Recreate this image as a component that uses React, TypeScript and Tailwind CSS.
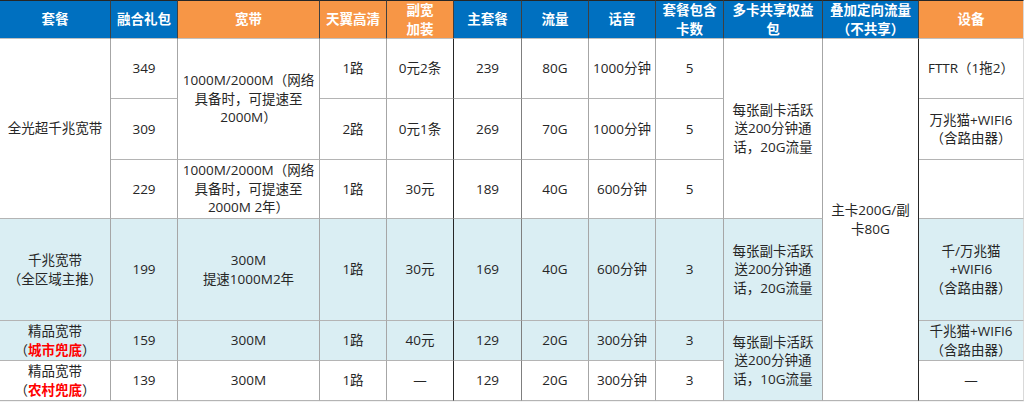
const DARK = "border-r-[#262626]";
const GRAY = "border-r-[#a6a6a6]";

const cols = [111, 67, 142, 67, 67, 68, 67, 67, 68, 99, 96, 105];

type Head = { label: React.ReactNode; orange?: boolean };

const heads: Head[] = [
  { label: "套餐" },
  { label: "融合礼包" },
  { label: "宽带", orange: true },
  { label: "天翼高清", orange: true },
  { label: <>副宽<br />加装</>, orange: true },
  { label: "主套餐" },
  { label: "流量" },
  { label: "话音" },
  { label: <>套餐包含<br />卡数</> },
  { label: <>多卡共享权益<br />包</> },
  { label: <>叠加定向流量<br />（不共享）</> },
  { label: "设备", orange: true },
];

// right-border colour per column (body rows)
const rightColor = [GRAY, GRAY, GRAY, GRAY, DARK, "border-r-[#7f7f7f]", GRAY, GRAY, GRAY, GRAY, DARK, "border-r-[#d9d9d9]"];

const Td = ({
  col,
  children,
  rowSpan,
  blue,
  className = "",
}: {
  col: number;
  children?: React.ReactNode;
  rowSpan?: number;
  blue?: boolean;
  className?: string;
}) => (
  <td
    rowSpan={rowSpan}
    className={`border-b border-r border-b-[#b4b4b4] px-1 text-center align-middle whitespace-nowrap ${rightColor[col]} ${
      blue ? "bg-[#daeef3]" : "bg-white"
    } ${className}`}
  >
    {children}
  </td>
);

const Red = ({ children }: { children: React.ReactNode }) => (
  <>
    （<span className="font-bold text-[#ff0000]">{children}</span>）
  </>
);

export default function App() {
  return (
    <div
      className="h-[402px] w-[1024px] overflow-hidden bg-[#f2f2f2] text-[13.5px] leading-[18.5px] text-[#262626]"
      style={{ fontFamily: '"Open Sans", "Noto Sans CJK SC", sans-serif' }}
    >
      <table className="w-[1024px] table-fixed border-separate border-spacing-0">
        <colgroup>
          {cols.map((w, i) => (
            <col key={i} style={{ width: w }} />
          ))}
        </colgroup>
        <thead>
          <tr className="h-[39px]">
            {heads.map((h, i) => (
              <th
                key={i}
                className={`border-t border-r border-b border-t-[#262626] border-r-[#404040] border-b-[#bfbfbf] px-0 text-center align-middle font-bold whitespace-nowrap text-white ${
                  h.orange ? "bg-[#f79646]" : "bg-[#0070c0]"
                } ${i === 11 ? "border-r-[#d9d9d9]" : ""}`}
              >
                {h.label}
              </th>
            ))}
          </tr>
        </thead>
        <tbody>
          <tr className="h-[60px]">
            <Td col={0} rowSpan={3}>全光超千兆宽带</Td>
            <Td col={1}>349</Td>
            <Td col={2} rowSpan={2}>
              1000M/2000M（网络<br />具备时，可提速至<br />2000M）
            </Td>
            <Td col={3}>1路</Td>
            <Td col={4}>0元2条</Td>
            <Td col={5}>239</Td>
            <Td col={6}>80G</Td>
            <Td col={7}>1000分钟</Td>
            <Td col={8}>5</Td>
            <Td col={9} rowSpan={3}>
              每张副卡活跃<br />送200分钟通<br />话，20G流量
            </Td>
            <Td col={10} rowSpan={6}>
              主卡200G/副<br />卡80G
            </Td>
            <Td col={11}>FTTR（1拖2）</Td>
          </tr>
          <tr className="h-[61px]">
            <Td col={1}>309</Td>
            <Td col={3}>2路</Td>
            <Td col={4}>0元1条</Td>
            <Td col={5}>269</Td>
            <Td col={6}>70G</Td>
            <Td col={7}>1000分钟</Td>
            <Td col={8}>5</Td>
            <Td col={11}>
              万兆猫+WIFI6<br />（含路由器）
            </Td>
          </tr>
          <tr className="h-[59px]">
            <Td col={1}>229</Td>
            <Td col={2}>
              1000M/2000M（网络<br />具备时，可提速至<br />2000M 2年）
            </Td>
            <Td col={3}>1路</Td>
            <Td col={4}>30元</Td>
            <Td col={5}>189</Td>
            <Td col={6}>40G</Td>
            <Td col={7}>600分钟</Td>
            <Td col={8}>5</Td>
            <Td col={11} />
          </tr>
          <tr className="h-[102px]">
            <Td col={0} blue>
              千兆宽带<br />（全区域主推）
            </Td>
            <Td col={1} blue>199</Td>
            <Td col={2} blue>
              300M<br />提速1000M2年
            </Td>
            <Td col={3} blue>1路</Td>
            <Td col={4} blue>30元</Td>
            <Td col={5} blue>169</Td>
            <Td col={6} blue>40G</Td>
            <Td col={7} blue>600分钟</Td>
            <Td col={8} blue>3</Td>
            <Td col={9} blue>
              每张副卡活跃<br />送200分钟通<br />话，20G流量
            </Td>
            <Td col={11} blue>
              千/万兆猫<br />+WIFI6<br />（含路由器）
            </Td>
          </tr>
          <tr className="h-[40px]">
            <Td col={0} blue>
              精品宽带<br />
              <Red>城市兜底</Red>
            </Td>
            <Td col={1} blue>159</Td>
            <Td col={2} blue>300M</Td>
            <Td col={3} blue>1路</Td>
            <Td col={4} blue>40元</Td>
            <Td col={5} blue>129</Td>
            <Td col={6} blue>20G</Td>
            <Td col={7} blue>300分钟</Td>
            <Td col={8} blue>3</Td>
            <Td col={9} blue rowSpan={2}>
              每张副卡活跃<br />送200分钟通<br />话，10G流量
            </Td>
            <Td col={11} blue>
              千兆猫+WIFI6<br />（含路由器）
            </Td>
          </tr>
          <tr className="h-[40px]">
            <Td col={0}>
              精品宽带<br />
              <Red>农村兜底</Red>
            </Td>
            <Td col={1}>139</Td>
            <Td col={2}>300M</Td>
            <Td col={3}>1路</Td>
            <Td col={4}>—</Td>
            <Td col={5}>129</Td>
            <Td col={6}>20G</Td>
            <Td col={7}>300分钟</Td>
            <Td col={8}>3</Td>
            <Td col={11}>—</Td>
          </tr>
        </tbody>
      </table>
    </div>
  );
}
